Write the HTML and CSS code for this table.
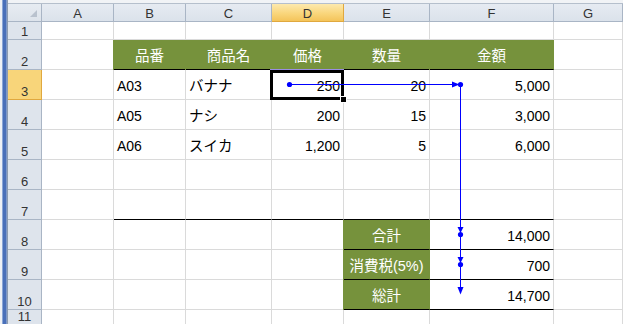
FILE: index.html
```html
<!DOCTYPE html>
<html lang="ja">
<head>
<meta charset="utf-8">
<title>Sheet</title>
<link rel="stylesheet" href="styles.css">
</head>
<body>
<div class="sheet">
  <div class="lstrip"></div>
  <div class="tstrip"></div>

  <div class="corner"><svg class="tri" width="33" height="17" viewBox="0 0 33 17"><polygon points="29,6 29,13 22,13" fill="#b9c2ce"/></svg></div>
  <div class="ch">A</div>
  <div class="ch">B</div>
  <div class="ch">C</div>
  <div class="ch sel">D</div>
  <div class="ch">E</div>
  <div class="ch">F</div>
  <div class="ch">G</div>

  <div class="rh">1</div>
  <div class="c"></div><div class="c"></div><div class="c"></div><div class="c"></div><div class="c"></div><div class="c"></div><div class="c"></div>

  <div class="rh">2</div>
  <div class="c"></div>
  <div class="c g bb jp">品番</div>
  <div class="c g bb jp">商品名</div>
  <div class="c g bb jp">価格</div>
  <div class="c g bb jp">数量</div>
  <div class="c g bb jp">金額</div>
  <div class="c"></div>

  <div class="rh sel">3</div>
  <div class="c"></div>
  <div class="c">A03</div>
  <div class="c jp">バナナ</div>
  <div class="c num act">250<div class="selbox"></div><div class="handle"></div></div>
  <div class="c num">20</div>
  <div class="c num">5,000</div>
  <div class="c"></div>

  <div class="rh">4</div>
  <div class="c"></div>
  <div class="c">A05</div>
  <div class="c jp">ナシ</div>
  <div class="c num">200</div>
  <div class="c num">15</div>
  <div class="c num">3,000</div>
  <div class="c"></div>

  <div class="rh">5</div>
  <div class="c"></div>
  <div class="c">A06</div>
  <div class="c jp">スイカ</div>
  <div class="c num">1,200</div>
  <div class="c num">5</div>
  <div class="c num">6,000</div>
  <div class="c"></div>

  <div class="rh">6</div>
  <div class="c"></div><div class="c"></div><div class="c"></div><div class="c"></div><div class="c"></div><div class="c"></div><div class="c"></div>

  <div class="rh">7</div>
  <div class="c"></div>
  <div class="c bb"></div>
  <div class="c bb"></div>
  <div class="c bb"></div>
  <div class="c bb"></div>
  <div class="c bb"></div>
  <div class="c"></div>

  <div class="rh">8</div>
  <div class="c"></div><div class="c"></div><div class="c"></div><div class="c"></div>
  <div class="c g bb jp">合計</div>
  <div class="c num bb">14,000</div>
  <div class="c"></div>

  <div class="rh">9</div>
  <div class="c"></div><div class="c"></div><div class="c"></div><div class="c"></div>
  <div class="c g bb jp">消費税(5%)</div>
  <div class="c num bb">700</div>
  <div class="c"></div>

  <div class="rh">10</div>
  <div class="c"></div><div class="c"></div><div class="c"></div><div class="c"></div>
  <div class="c g bb jp">総計</div>
  <div class="c num bb">14,700</div>
  <div class="c"></div>

  <div class="rh">11</div>
  <div class="c"></div><div class="c"></div><div class="c"></div><div class="c"></div><div class="c"></div><div class="c"></div><div class="c"></div>

  <svg class="arrows" width="623" height="324" viewBox="0 0 623 324">
    <g fill="#0000ff" stroke="none">
      <circle cx="289.5" cy="84.5" r="2.6"/>
      <polygon points="452,81.5 459.5,84.5 452,87.5"/>
      <circle cx="460.5" cy="84.5" r="2.6"/>
      <polygon points="457.5,227 463.5,227 460.5,233"/>
      <circle cx="460.5" cy="234.5" r="2.6"/>
      <polygon points="457.5,257 463.5,257 460.5,263"/>
      <circle cx="460.5" cy="264.5" r="2.6"/>
      <polygon points="457.5,287 463.5,287 460.5,294.5"/>
    </g>
    <g stroke="#0000ff" stroke-width="1" fill="none">
      <line x1="289.5" y1="84.5" x2="455" y2="84.5"/>
      <line x1="460.5" y1="84.5" x2="460.5" y2="289"/>
    </g>
  </svg>
</div>
</body>
</html>
```

FILE: styles.css
```css
html, body {
  margin: 0;
  padding: 0;
  background: #ffffff;
  overflow: hidden;
}

.sheet {
  position: relative;
  width: 623px;
  height: 324px;
  display: grid;
  grid-template-columns: 8px 34px 72px 72px 86px 72px 86px 124px 1fr;
  grid-template-rows: 4px 18px 18px repeat(9, 30px) 1fr;
  font-family: "Liberation Sans", "Noto Sans CJK JP", sans-serif;
  overflow: hidden;
}

.lstrip {
  grid-row: 1 / -1;
  grid-column: 1;
  background: linear-gradient(to right, #eef1f5 0 2px, #8aa6d6 2px 3px, #4a70b9 3px 6px, #7d98c8 6px 7px, #8c9bb0 7px 8px);
}

.tstrip {
  grid-row: 1;
  grid-column: 2 / -1;
  background: #f1f3f6;
  border-bottom: 1px solid #b5bfcc;
}

.corner {
  background: linear-gradient(#e7ecf2, #dde3eb);
  border-right: 1px solid #a9b5c5;
  border-bottom: 1px solid #a9b5c5;
}

.tri {
  display: block;
}

.ch {
  display: flex;
  align-items: center;
  justify-content: center;
  background: linear-gradient(#e6ebf2, #dbe2eb);
  border-right: 1px solid #a9b5c5;
  border-bottom: 1px solid #a9b5c5;
  font-size: 13px;
  color: #333333;
  padding-top: 1px;
}

.ch.sel {
  background: linear-gradient(#fde9ae, #f9d67c 55%, #f4c45a);
  border-right-color: #e0a83f;
  border-bottom-color: #e0a83f;
}

.rh {
  display: flex;
  align-items: flex-end;
  justify-content: center;
  background: #dee4ec;
  border-right: 1px solid #a9b5c5;
  border-bottom: 1px solid #a9b5c5;
  font-size: 13px;
  color: #333333;
  padding-bottom: 1px;
  line-height: 13px;
}

.rh.sel {
  background: #f8d57a;
  border-right-color: #e0a83f;
  border-bottom-color: #e0a83f;
}

.c {
  display: flex;
  align-items: center;
  padding: 2px 3px 0 3px;
  border-right: 1px solid #dadada;
  border-bottom: 1px solid #dadada;
  font-size: 14px;
  line-height: 16px;
  color: #000000;
  white-space: nowrap;
  overflow: hidden;
}

.jp {
  font-size: 14.5px;
  padding-top: 3px;
}

.num {
  justify-content: flex-end;
}

.g {
  background: #76923c;
  color: #ffffff;
  justify-content: center;
  border-right-color: #76923c;
  box-shadow: -1px 0 0 #76923c;
}

.bb {
  border-bottom-color: #000000;
}

.act {
  position: relative;
  overflow: visible;
}

.selbox {
  position: absolute;
  left: -2px;
  top: 0;
  right: -1px;
  bottom: -1px;
  border: 3px solid #000000;
}

.selbox::before {
  content: "";
  position: absolute;
  left: -3px;
  right: -3px;
  top: -4px;
  height: 1px;
  background: #9a8ee0;
}

.handle {
  position: absolute;
  left: 69px;
  top: 27px;
  width: 5px;
  height: 5px;
  background: #000000;
  box-shadow: 0 0 0 1px #ffffff;
}

.arrows {
  position: absolute;
  left: 0;
  top: 0;
  pointer-events: none;
}
```
